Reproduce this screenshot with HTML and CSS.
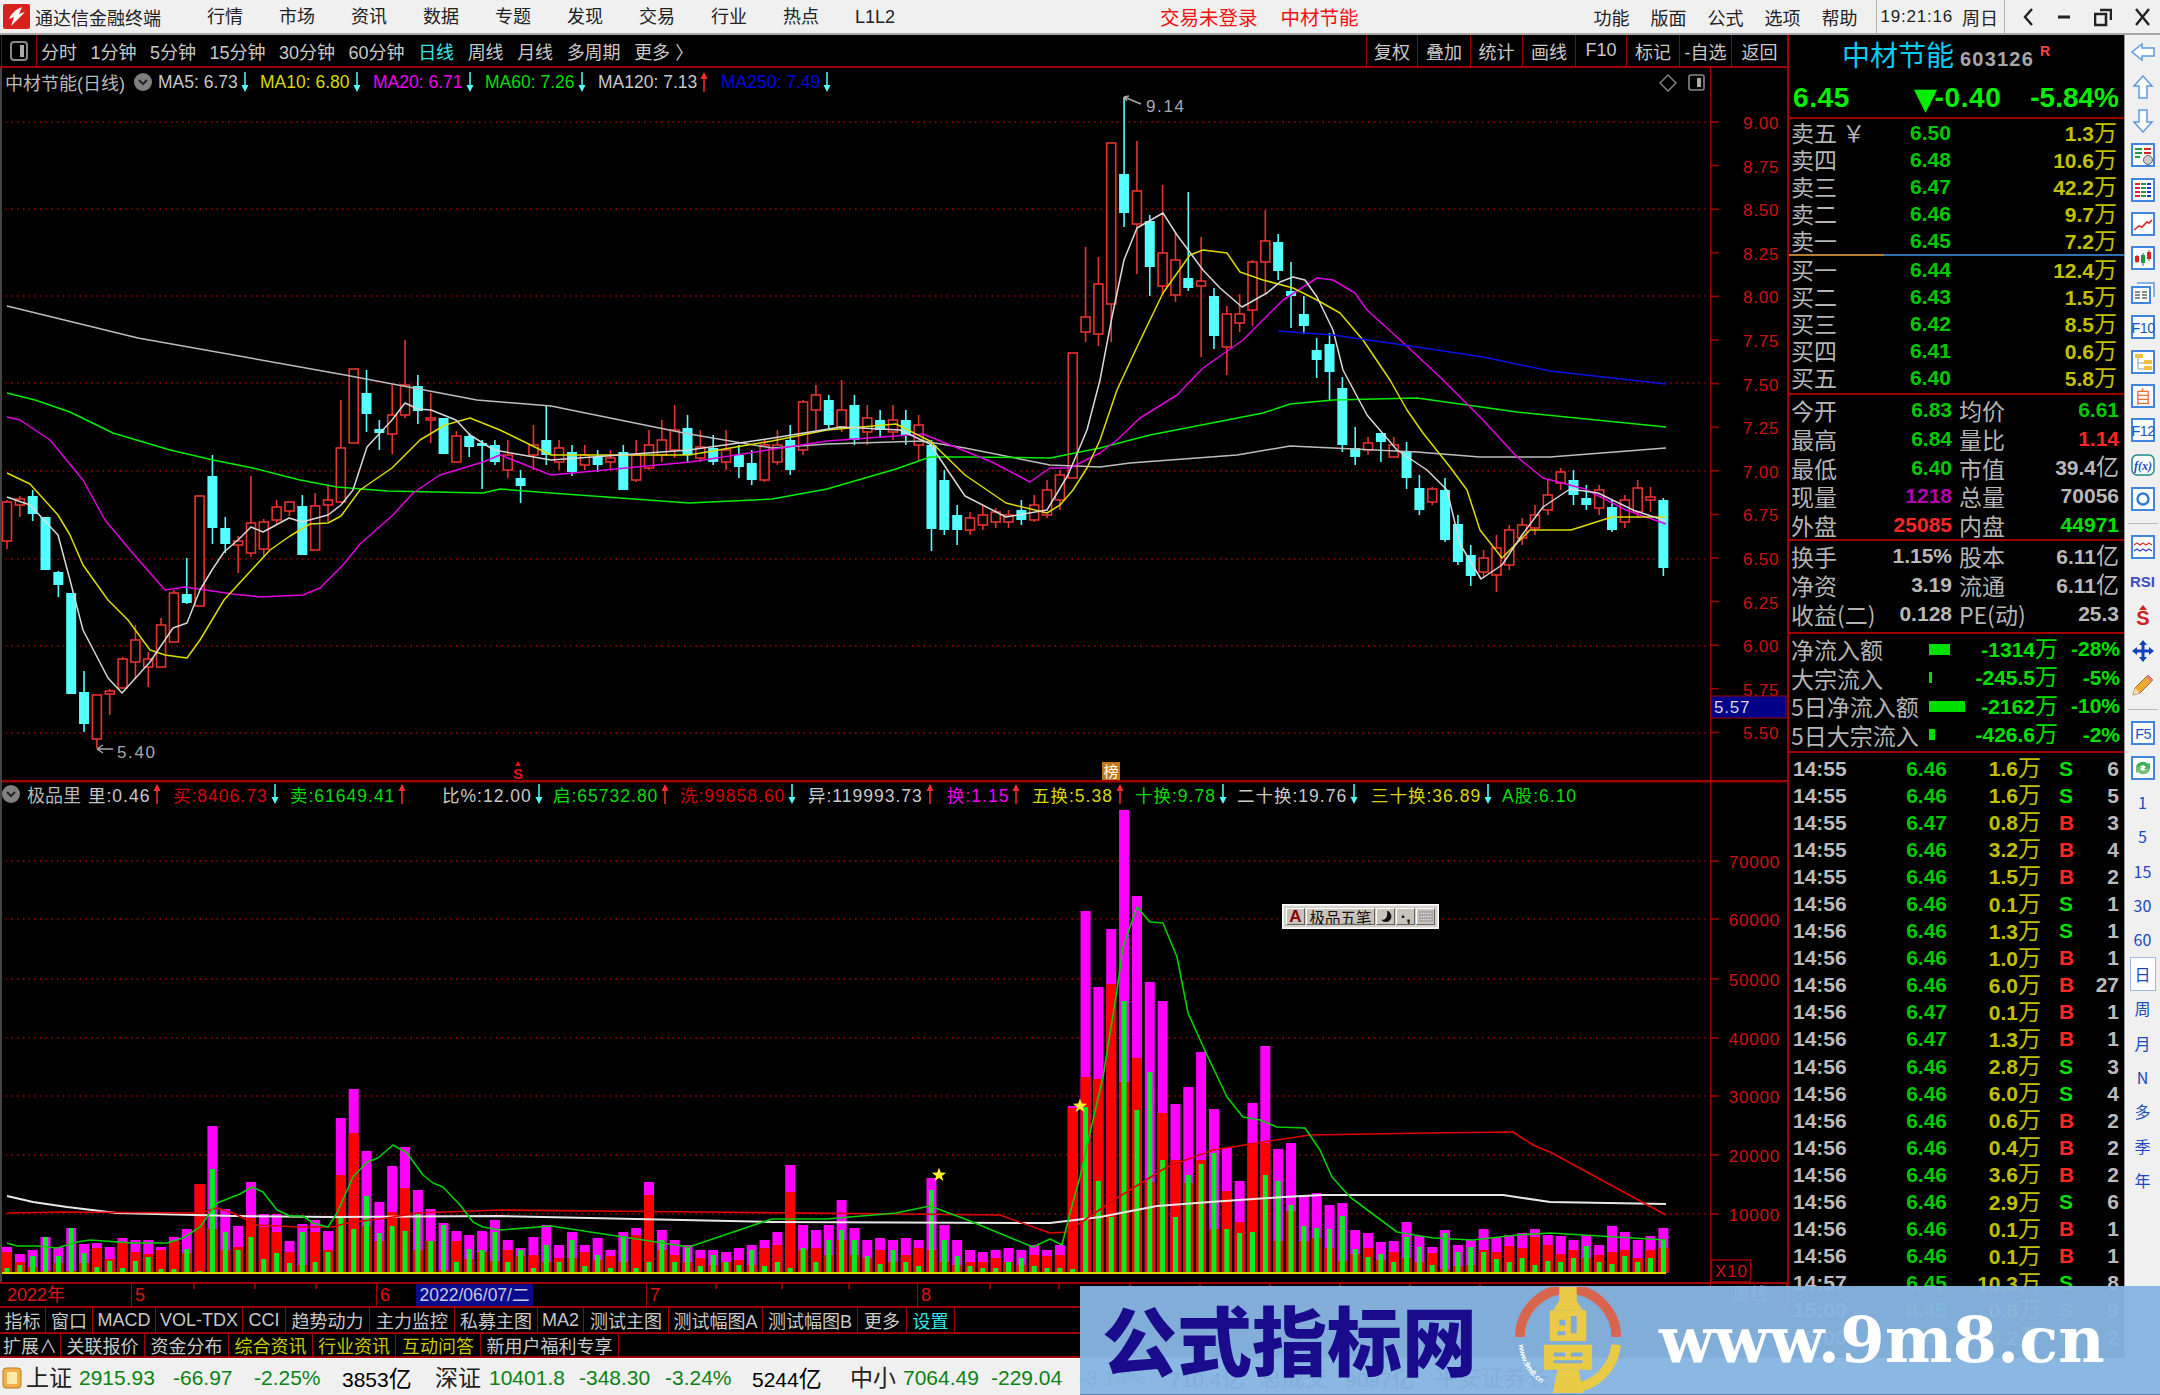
FILE: index.html
```html
<!DOCTYPE html>
<html lang="zh-CN">
<head>
<meta charset="utf-8">
<title>通达信金融终端</title>
<link rel="stylesheet" href="styles.css">
</head>
<body>
<svg class="defs" width="0" height="0">
  <symbol id="up" viewBox="0 0 8 20"><path d="M4 20V5" stroke="#ff2a2a" stroke-width="1.5"/><path d="M4 0L7.5 7H.5Z" fill="#ff2a2a"/></symbol>
  <symbol id="down" viewBox="0 0 8 20"><path d="M4 0V15" stroke="#54ffff" stroke-width="1.5"/><path d="M4 20L7.5 13H.5Z" fill="#54ffff"/></symbol>
  <symbol id="chev" viewBox="0 0 18 18"><circle cx="9" cy="9" r="9" fill="#808080"/><path d="M5 7l4 4 4-4" fill="none" stroke="#222" stroke-width="2"/></symbol>
</svg>
<div class="app">
  <header class="titlebar">
    <svg class="logo" viewBox="0 0 27 25"><rect width="27" height="25" rx="2" fill="#d8201c"/><path d="M19 3C13 5 8 10 6 15l5-2-3 9C13 17 18 12 22 8l-6 2Z" fill="#fff"/></svg>
    <span class="app-name">通达信金融终端</span>
    <nav class="menu">
      <span>行情</span><span>市场</span><span>资讯</span><span>数据</span><span>专题</span><span>发现</span><span>交易</span><span>行业</span><span>热点</span><span>L1L2</span>
    </nav>
    <span class="alert first">交易未登录</span>
    <span class="alert">中材节能</span>
    <nav class="menu-right">
      <span>功能</span><span>版面</span><span>公式</span><span>选项</span><span>帮助</span>
    </nav>
    <div class="clock"><span class="time">19:21:16</span><span>周日</span></div>
    <div class="winbtns">
      <svg viewBox="0 0 12 20"><path d="M10 2L3 10l7 8" fill="none" stroke="#222" stroke-width="2.4"/></svg>
      <svg viewBox="0 0 14 20"><path d="M1 10h12" stroke="#222" stroke-width="3"/></svg>
      <svg viewBox="0 0 18 20"><path d="M6 3h11v10M1 7h11v11H1Z" fill="none" stroke="#222" stroke-width="2.6"/></svg>
      <svg viewBox="0 0 15 20"><path d="M1 2l13 16M14 2L1 18" stroke="#222" stroke-width="2.4"/></svg>
    </div>
  </header>

  <div class="workspace">
    <main class="left">
      <div class="toolbar">
        <div class="tool-icon"><svg viewBox="0 0 20 22"><rect x="2" y="2" width="16" height="18" rx="3" fill="none" stroke="#888" stroke-width="2"/><rect x="11" y="5" width="4" height="12" fill="#aaa"/></svg></div>
        <div class="periods">
          <span>分时</span><span>1分钟</span><span>5分钟</span><span>15分钟</span><span>30分钟</span><span>60分钟</span><span class="on">日线</span><span>周线</span><span>月线</span><span>多周期</span><span>更多 〉</span>
        </div>
        <div class="tool-right">
          <span>复权</span><span>叠加</span><span>统计</span><span>画线</span><span>F10</span><span>标记</span><span>-自选</span><span>返回</span>
        </div>
      </div>

      <div class="chart">
        <svg id="chart" class="chart-svg" viewBox="0 68 1787 1214" width="1787" height="1214"></svg>

        <div class="legend legend-price">
          <span class="name">中材节能(日线)</span>
          <svg class="chev"><use href="#chev"/></svg>
          <span class="it w">MA5: 6.73<svg class="arr"><use href="#down"/></svg></span>
          <span class="it y">MA10: 6.80<svg class="arr"><use href="#down"/></svg></span>
          <span class="it m">MA20: 6.71<svg class="arr"><use href="#down"/></svg></span>
          <span class="it g">MA60: 7.26<svg class="arr"><use href="#down"/></svg></span>
          <span class="it w">MA120: 7.13<svg class="arr"><use href="#up"/></svg></span>
          <span class="it b">MA250: 7.49<svg class="arr"><use href="#down"/></svg></span>
        </div>

        <div class="legend legend-vol">
          <svg class="chev"><use href="#chev"/></svg>
          <span class="name">极品里</span>
          <span class="it w">里:0.46<svg class="arr"><use href="#up"/></svg></span>
          <span class="it r">买:8406.73<svg class="arr"><use href="#down"/></svg></span>
          <span class="it g">卖:61649.41<svg class="arr"><use href="#up"/></svg></span>
          <span class="it w">比%:12.00<svg class="arr"><use href="#down"/></svg></span>
          <span class="it g">启:65732.80<svg class="arr"><use href="#up"/></svg></span>
          <span class="it r">洗:99858.60<svg class="arr"><use href="#down"/></svg></span>
          <span class="it w">异:119993.73<svg class="arr"><use href="#up"/></svg></span>
          <span class="it m">换:1.15<svg class="arr"><use href="#up"/></svg></span>
          <span class="it y">五换:5.38<svg class="arr"><use href="#up"/></svg></span>
          <span class="it g">十换:9.78<svg class="arr"><use href="#down"/></svg></span>
          <span class="it w">二十换:19.76<svg class="arr"><use href="#down"/></svg></span>
          <span class="it y">三十换:36.89<svg class="arr"><use href="#down"/></svg></span>
          <span class="it g">A股:6.10</span>
        </div>

        <div class="ime">
          <span class="ime-btn ime-a">A</span>
          <span class="ime-btn ime-name">极品五笔</span>
          <span class="ime-btn ime-ic"><svg viewBox="0 0 16 16"><path d="M9 1A7 7 0 1 1 2 12C7 13 11 8 9 1Z" fill="#111"/></svg></span>
          <span class="ime-btn ime-ic">·,</span>
          <span class="ime-btn ime-ic"><svg viewBox="0 0 18 14"><rect width="18" height="14" fill="#a8a8a8"/><path d="M2 3h14M2 7h14M2 11h14" stroke="#eee" stroke-dasharray="2 1"/></svg></span>
        </div>
      </div>

      <div class="daterow">
        <span class="dcell year">2022年</span>
        <span class="dcell">5</span>
        <span class="dcell">6</span>
        <span class="dcell">7</span>
        <span class="dcell">8</span>
        <span class="dcell dcell-end">周线</span>
        <svg class="dticks" viewBox="0 0 1787 6" width="1787" height="6"><path d="M194 0v5M255 0v5M316 0v5M716 0v5M782 0v5M849 0v5M990 0v5M1059 0v5M1130 0v5M1200 0v5M1270 0v5M1340 0v5M1410 0v5M1480 0v5" stroke="#b00000" stroke-width="1.5"/></svg>
        <span class="dcursor">2022/06/07/二</span>
      </div>

      <div class="tabs tabs-a">
        <span>指标</span><span>窗口</span><span>MACD</span><span>VOL-TDX</span><span>CCI</span><span>趋势动力</span><span>主力监控</span><span>私募主图</span><span>MA2</span><span>测试主图</span><span>测试幅图A</span><span>测试幅图B</span><span>更多</span><span class="cy">设置</span>
      </div>
      <div class="tabs tabs-b">
        <span>扩展∧</span><span>关联报价</span><span>资金分布</span><span class="ye">综合资讯</span><span class="ye">行业资讯</span><span class="ye">互动问答</span><span>新用户福利专享</span>
      </div>
    </main>

    <aside class="quote">
      <div class="q-head">
        <span class="q-name">中材节能</span><span class="q-code">603126</span><span class="q-r">R</span>
      </div>
      <div class="q-price">
        <span>6.45</span><span class="q-chg"><b class="tri">▼</b>-0.40</span><span>-5.84%</span>
      </div>
      <div class="book">
        <div class="book-row"><span class="k">卖五 ￥</span><span class="v gr">6.50</span><span class="q ye2">1.3<i class="u">万</i></span></div>
        <div class="book-row"><span class="k">卖四</span><span class="v gr">6.48</span><span class="q ye2">10.6<i class="u">万</i></span></div>
        <div class="book-row"><span class="k">卖三</span><span class="v gr">6.47</span><span class="q ye2">42.2<i class="u">万</i></span></div>
        <div class="book-row"><span class="k">卖二</span><span class="v gr">6.46</span><span class="q ye2">9.7<i class="u">万</i></span></div>
        <div class="book-row"><span class="k">卖一</span><span class="v gr">6.45</span><span class="q ye2">7.2<i class="u">万</i></span></div>
      </div>
      <div class="book-mid"></div>
      <div class="book book-buy">
        <div class="book-row"><span class="k">买一</span><span class="v gr">6.44</span><span class="q ye2">12.4<i class="u">万</i></span></div>
        <div class="book-row"><span class="k">买二</span><span class="v gr">6.43</span><span class="q ye2">1.5<i class="u">万</i></span></div>
        <div class="book-row"><span class="k">买三</span><span class="v gr">6.42</span><span class="q ye2">8.5<i class="u">万</i></span></div>
        <div class="book-row"><span class="k">买四</span><span class="v gr">6.41</span><span class="q ye2">0.6<i class="u">万</i></span></div>
        <div class="book-row"><span class="k">买五</span><span class="v gr">6.40</span><span class="q ye2">5.8<i class="u">万</i></span></div>
      </div>
      <div class="stats">
        <div class="st-row"><span class="k">今开</span><span class="v gr">6.83</span><span class="k k2">均价</span><span class="v gr">6.61</span></div>
        <div class="st-row"><span class="k">最高</span><span class="v gr">6.84</span><span class="k k2">量比</span><span class="v rd">1.14</span></div>
        <div class="st-row"><span class="k">最低</span><span class="v gr">6.40</span><span class="k k2">市值</span><span class="v wh">39.4<i class="u">亿</i></span></div>
        <div class="st-row"><span class="k">现量</span><span class="v mg">1218</span><span class="k k2">总量</span><span class="v wh">70056</span></div>
        <div class="st-row"><span class="k">外盘</span><span class="v rd">25085</span><span class="k k2">内盘</span><span class="v gr2">44971</span></div>
      </div>
      <div class="stats stats-b">
        <div class="st-row"><span class="k">换手</span><span class="v wh">1.15%</span><span class="k k2">股本</span><span class="v wh">6.11<i class="u">亿</i></span></div>
        <div class="st-row"><span class="k">净资</span><span class="v wh">3.19</span><span class="k k2">流通</span><span class="v wh">6.11<i class="u">亿</i></span></div>
        <div class="st-row"><span class="k">收益(二)</span><span class="v wh">0.128</span><span class="k k2">PE(动)</span><span class="v wh">25.3</span></div>
      </div>
      <div class="flows">
        <div class="fl-row"><span class="k">净流入额</span><span class="barcell"><i style="width:21px"></i></span><span class="v gr2">-1314<i class="u">万</i></span><span class="v gr2">-28%</span></div>
        <div class="fl-row"><span class="k">大宗流入</span><span class="barcell"><i style="width:3px"></i></span><span class="v gr2">-245.5<i class="u">万</i></span><span class="v gr2">-5%</span></div>
        <div class="fl-row"><span class="k">5日净流入额</span><span class="barcell"><i style="width:36px"></i></span><span class="v gr2">-2162<i class="u">万</i></span><span class="v gr2">-10%</span></div>
        <div class="fl-row"><span class="k">5日大宗流入</span><span class="barcell"><i style="width:6px"></i></span><span class="v gr2">-426.6<i class="u">万</i></span><span class="v gr2">-2%</span></div>
      </div>
      <div class="ticks">
        <div class="tk"><span>14:55</span><span class="gr">6.46</span><span class="ye2">1.6<i class="u">万</i></span><span class="gr2">S</span><span>6</span></div>
        <div class="tk"><span>14:55</span><span class="gr">6.46</span><span class="ye2">1.6<i class="u">万</i></span><span class="gr2">S</span><span>5</span></div>
        <div class="tk"><span>14:55</span><span class="gr">6.47</span><span class="ye2">0.8<i class="u">万</i></span><span class="rd">B</span><span>3</span></div>
        <div class="tk"><span>14:55</span><span class="gr">6.46</span><span class="ye2">3.2<i class="u">万</i></span><span class="rd">B</span><span>4</span></div>
        <div class="tk"><span>14:55</span><span class="gr">6.46</span><span class="ye2">1.5<i class="u">万</i></span><span class="rd">B</span><span>2</span></div>
        <div class="tk"><span>14:56</span><span class="gr">6.46</span><span class="ye2">0.1<i class="u">万</i></span><span class="gr2">S</span><span>1</span></div>
        <div class="tk"><span>14:56</span><span class="gr">6.46</span><span class="ye2">1.3<i class="u">万</i></span><span class="gr2">S</span><span>1</span></div>
        <div class="tk"><span>14:56</span><span class="gr">6.46</span><span class="ye2">1.0<i class="u">万</i></span><span class="rd">B</span><span>1</span></div>
        <div class="tk"><span>14:56</span><span class="gr">6.46</span><span class="ye2">6.0<i class="u">万</i></span><span class="rd">B</span><span>27</span></div>
        <div class="tk"><span>14:56</span><span class="gr">6.47</span><span class="ye2">0.1<i class="u">万</i></span><span class="rd">B</span><span>1</span></div>
        <div class="tk"><span>14:56</span><span class="gr">6.47</span><span class="ye2">1.3<i class="u">万</i></span><span class="rd">B</span><span>1</span></div>
        <div class="tk"><span>14:56</span><span class="gr">6.46</span><span class="ye2">2.8<i class="u">万</i></span><span class="gr2">S</span><span>3</span></div>
        <div class="tk"><span>14:56</span><span class="gr">6.46</span><span class="ye2">6.0<i class="u">万</i></span><span class="gr2">S</span><span>4</span></div>
        <div class="tk"><span>14:56</span><span class="gr">6.46</span><span class="ye2">0.6<i class="u">万</i></span><span class="rd">B</span><span>2</span></div>
        <div class="tk"><span>14:56</span><span class="gr">6.46</span><span class="ye2">0.4<i class="u">万</i></span><span class="rd">B</span><span>2</span></div>
        <div class="tk"><span>14:56</span><span class="gr">6.46</span><span class="ye2">3.6<i class="u">万</i></span><span class="rd">B</span><span>2</span></div>
        <div class="tk"><span>14:56</span><span class="gr">6.46</span><span class="ye2">2.9<i class="u">万</i></span><span class="gr2">S</span><span>6</span></div>
        <div class="tk"><span>14:56</span><span class="gr">6.46</span><span class="ye2">0.1<i class="u">万</i></span><span class="rd">B</span><span>1</span></div>
        <div class="tk"><span>14:56</span><span class="gr">6.46</span><span class="ye2">0.1<i class="u">万</i></span><span class="rd">B</span><span>1</span></div>
        <div class="tk"><span>14:57</span><span class="gr">6.45</span><span class="ye2">10.3<i class="u">万</i></span><span class="gr2">S</span><span>8</span></div>
        <div class="tk"><span>15:00</span><span class="gr">6.45</span><span class="ye2">0.6<i class="u">万</i></span><span class="gr2">S</span><span>9</span></div>
        <div class="tk"><span>15:00</span><span class="gr">6.45</span><span class="ye2">0.2<i class="u">万</i></span><span class="gr2">S</span><span>2</span></div>
      </div>
    </aside>

    <aside class="sidebar">
      <svg class="ico" viewBox="0 0 24 24"><path class="arrow" d="M1 12L11 4V8H23V16H11V20Z"/></svg>
      <svg class="ico" viewBox="0 0 24 24"><path class="arrow" d="M12 1L21 11H16V23H8V11H3Z"/></svg>
      <svg class="ico" viewBox="0 0 24 24"><path class="arrow" d="M12 23L21 13H16V1H8V13H3Z"/></svg>
      <svg class="ico" viewBox="0 0 24 24"><rect class="frame" x="1" y="1" width="22" height="22"/><path d="M4 6h7M4 10h7M4 14h5" stroke="#1a9a3a" stroke-width="2"/><path d="M13 6h7M13 10h7" stroke="#e02020" stroke-width="2"/><circle cx="17" cy="17" r="4.5" fill="#ccc" stroke="#666"/></svg>
      <svg class="ico" viewBox="0 0 24 24"><rect class="frame" x="1" y="1" width="22" height="22"/><path d="M4 6h5M4 10h5M4 14h5M4 18h5" stroke="#e02020" stroke-width="2"/><path d="M10 6h5M10 10h5M10 14h5M10 18h5" stroke="#1a9a3a" stroke-width="2"/><path d="M16 6h4M16 10h4M16 14h4M16 18h4" stroke="#2030d0" stroke-width="2"/></svg>
      <svg class="ico" viewBox="0 0 24 24"><rect class="frame" x="1" y="1" width="22" height="22"/><path d="M3 18l5-4 3 1 5-5 2 1 3-3" fill="none" stroke="#e02020" stroke-width="1.6"/></svg>
      <svg class="ico" viewBox="0 0 24 24"><rect class="frame" x="1" y="1" width="22" height="22"/><path d="M6 9v8M12 7v13M18 4v11" stroke="#555" stroke-width="1"/><rect x="4" y="10" width="4" height="6" fill="#e02020"/><rect x="10" y="9" width="4" height="8" fill="#1a9a3a"/><rect x="16" y="6" width="4" height="7" fill="#e02020"/></svg>
      <svg class="ico" viewBox="0 0 24 24"><path d="M6 2h17v14" fill="#fff" stroke="#5b9be0" stroke-width="1.5"/><rect class="frame" x="1" y="6" width="18" height="16"/><path d="M4 11h5M11 11h5M4 14h5M11 14h5M4 17h5M11 17h5" stroke="#666" stroke-width="1.5"/></svg>
      <svg class="ico" viewBox="0 0 24 24"><rect class="frame" x="1" y="1" width="22" height="22"/><text class="ico-f" x="12" y="18">F10</text></svg>
      <svg class="ico" viewBox="0 0 24 24"><rect class="frame" x="1" y="1" width="22" height="22"/><path d="M7 8v11h6M7 13h6" fill="none" stroke="#999"/><rect x="4" y="4" width="8" height="4" fill="#f0c040"/><rect x="13" y="10" width="8" height="4" fill="#f0c040"/><rect x="13" y="16" width="8" height="4" fill="#f0c040"/></svg>
      <svg class="ico" viewBox="0 0 24 24"><rect class="frame" x="1" y="1" width="22" height="22"/><text class="ico-o" x="12" y="19">自</text></svg>
      <svg class="ico" viewBox="0 0 24 24"><rect class="frame" x="1" y="1" width="22" height="22"/><text class="ico-f" x="12" y="18">F12</text></svg>
      <svg class="ico" viewBox="0 0 24 24"><rect x="1" y="2" width="22" height="20" rx="5" fill="#fff" stroke="#1a8a8a" stroke-width="1.5"/><text class="ico-x" x="12" y="17">f(x)</text></svg>
      <svg class="ico" viewBox="0 0 24 24"><rect class="frame" x="1" y="1" width="22" height="22"/><circle cx="12" cy="12" r="5.5" fill="none" stroke="#2a7ae0" stroke-width="2.4"/></svg>
      <div class="side-sep"></div>
      <svg class="ico" viewBox="0 0 24 24"><rect class="frame" x="1" y="1" width="22" height="22"/><path d="M3 10l3-2 3 2 3-2 3 2 3-2 3 2" fill="none" stroke="#e03030" stroke-width="1.3"/><path d="M3 16l3-2 3 2 3-2 3 2 3-2 3 2" fill="none" stroke="#3040d0" stroke-width="1.3"/></svg>
      <span class="side-rsi">RSI</span>
      <svg class="ico" viewBox="0 0 24 24"><path d="M12 1l4 5h-8Z" fill="#d02020"/><text class="ico-s" x="12" y="21">S</text></svg>
      <svg class="ico" viewBox="0 0 24 24"><path d="M12 1l4 5h-2.5v4.5H18V8l5 4-5 4v-2.500h-4.500V18H16l-4 5-4-5h2.500v-4.500H6V16l-5-4 5-4v2.500h4.500V6H8Z" fill="#1040c0"/></svg>
      <svg class="ico" viewBox="0 0 24 24"><path d="M2 22l2-7L17 2l5 5L9 20Z" fill="#f0a830" stroke="#8a6a30"/><path d="M2 22l2-7 5 5Z" fill="#f5e0b0"/><path d="M17 2l5 5-2 2-5-5Z" fill="#e08080"/></svg>
      <div class="side-sep"></div>
      <svg class="ico" viewBox="0 0 24 24"><rect class="frame" x="1" y="1" width="22" height="22"/><text class="ico-f" x="12" y="18">F5</text></svg>
      <svg class="ico" viewBox="0 0 24 24"><rect class="frame" x="1" y="1" width="22" height="22"/><path d="M5 11a7 7 0 0 1 12-3l2-1v6h-6l2-2a4 4 0 0 0-7 1Z" fill="#40b050"/><path d="M19 13a7 7 0 0 1-12 3l-2 1v-6h6l-2 2a4 4 0 0 0 7-1Z" fill="#70c070"/></svg>
      <span class="side-t">1</span><span class="side-t">5</span><span class="side-t">15</span><span class="side-t">30</span><span class="side-t">60</span>
      <span class="side-t side-on">日</span><span class="side-t">周</span><span class="side-t">月</span><span class="side-t">N</span><span class="side-t">多</span><span class="side-t">季</span><span class="side-t">年</span>
    </aside>
  </div>

  <footer class="status">
    <svg class="status-ico" viewBox="0 0 20 22"><rect x="1" y="1" width="18" height="20" rx="3" fill="#f2b04a" stroke="#b87a20"/><rect x="5" y="5" width="10" height="12" fill="#fde9a8"/></svg>
    <span class="lab">上证</span><span class="up">2915.93</span><span class="up">-66.97</span><span class="up">-2.25%</span><span class="amt">3853<i class="amtu">亿</i></span>
    <span class="lab">深证</span><span class="up">10401.8</span><span class="up">-348.30</span><span class="up">-3.24%</span><span class="amt">5244<i class="amtu">亿</i></span>
    <span class="lab">中小</span><span class="up">7064.49</span><span class="up">-229.04</span><span class="up">-3.14%</span><span class="amt">710.4<i class="amtu">亿</i></span>
    <span class="lab">总成交</span><span class="amt">9097<i class="amtu">亿</i></span><span class="lab">平安证券长方</span>
  </footer>

  <aside class="banner">
    <span class="banner-cn">公式指标网</span>
    <svg class="banner-logo" viewBox="0 0 110 110">
      <path d="M5 52A50 50 0 0 1 105 52" fill="none" stroke="#d9654e" stroke-width="10"/>
      <path d="M105 60A50 50 0 0 1 60 105" fill="none" stroke="#e9cb48" stroke-width="10"/>
      <path d="M46 0h18v14l6 10H40l6-10Z" fill="#e9cb48"/>
      <path d="M36 24h38v32H36Z" fill="#e9cb48"/>
      <path d="M46 34h6v6h-6ZM58 30h6v18h-6ZM44 46h8v4h-8Z" fill="#7fabd8"/>
      <path d="M30 60h50v26H30Z" fill="#e9cb48"/>
      <path d="M40 68h12v4H40ZM58 68h12v4H58ZM40 76h30v3H40Z" fill="#7fabd8"/>
      <path d="M44 86h22l5 24H39Z" fill="#e9cb48"/>
      <path id="arcText" d="M4 60A52 52 0 0 0 40 106" fill="none"/>
      <text class="banner-arc"><textPath href="#arcText">www.9m8.cn</textPath></text>
    </svg>
    <span class="banner-url">www.9m8.cn</span>
  </aside>
</div>
<script src="chart.js"></script>
</body>
</html>
```

FILE: styles.css
```css
* { box-sizing: border-box; }
html, body { margin: 0; padding: 0; background: #000; }
body { font-family: "Liberation Sans", "Noto Sans CJK SC", sans-serif; }
.defs { position: absolute; }

.app { width: 2160px; height: 1395px; display: flex; flex-direction: column; overflow: hidden; position: relative; background: #000; }

/* title bar */
.titlebar { height: 35px; flex: none; display: flex; align-items: center; padding-left: 3px; background: #f0f0f0; border-bottom: 2px solid #a8a8a8; color: #222; font-size: 18px; }
.logo { width: 27px; height: 25px; flex: none; }
.app-name { margin-left: 5px; width: 126px; white-space: nowrap; }
.menu { display: flex; align-items: center; gap: 36px; margin-left: 46px; }
.menu span { width: 36px; white-space: nowrap; line-height: 24px; }
.alert { color: #f01010; font-size: 19.500px; white-space: nowrap; margin-left: 23px; }
.alert.first { margin-left: 269px; }
.menu-right { display: flex; gap: 21px; margin-left: auto; }
.menu-right span { white-space: nowrap; }
.clock { height: 33px; display: flex; align-items: center; gap: 9px; margin-left: 19px; padding: 0 6px 0 3px; border-left: 1px solid #b0b0b0; border-right: 1px solid #b0b0b0; white-space: nowrap; }
.time { font-size: 17px; letter-spacing: .8px; }
.winbtns { display: flex; align-items: center; gap: 23px; padding: 0 10px 0 17px; }
.winbtns svg { height: 20px; width: auto; }
.winbtns svg:nth-child(1) { width: 12px; }
.winbtns svg:nth-child(2) { width: 14px; }
.winbtns svg:nth-child(3) { width: 18px; }
.winbtns svg:nth-child(4) { width: 15px; }

.workspace { flex: none; height: 1323px; display: flex; }

/* left column */
.left { width: 1787px; flex: none; display: flex; flex-direction: column; }
.toolbar { height: 33px; flex: none; display: flex; align-items: stretch; border-bottom: 2px solid #a00000; color: #c8c8c8; font-size: 18px; }
.tool-icon { width: 36px; margin-left: 1px; border-left: 1px solid #900000; border-right: 1px solid #900000; display: flex; align-items: center; justify-content: center; flex: none; }
.tool-icon svg { width: 20px; height: 22px; }
.periods { display: flex; align-items: center; gap: 13.500px; margin-left: 4px; }
.periods span { white-space: nowrap; }
.periods .on { color: #35e8e8; }
.tool-right { display: grid; grid-template-columns: 51px 53px 52px 53px 51px 53px 52px 56px; margin-left: auto; }
.tool-right span { display: flex; align-items: center; justify-content: center; border-left: 1px solid #900000; white-space: nowrap; }

.chart { height: 1214px; flex: none; position: relative; border-left: 2px solid #444; overflow: hidden; }
.chart-svg { display: block; margin-left: -2px; }
.axis { font-family: "Liberation Sans", sans-serif; font-size: 17px; fill: #d01010; letter-spacing: .8px; }
.mark { font-family: "Liberation Sans", sans-serif; font-size: 17px; fill: #a8a8a8; letter-spacing: 1.6px; }
.flag { font-family: "Noto Sans CJK SC", sans-serif; font-size: 15px; fill: #fff; }
.dollar { font-family: "Liberation Sans", sans-serif; font-size: 15px; font-weight: bold; fill: #e01010; }

.legend { position: absolute; left: 0; display: grid; align-items: center; height: 26px; font-size: 17.500px; color: #c8c8c8; white-space: nowrap; }
.legend-price { top: 1px; padding-left: 3px; grid-template-columns: 129px 24px 102px 113px 112px 113px 123px 120px; }
.legend-vol { top: 713px; padding-left: 0; letter-spacing: 1px; grid-template-columns: 25px 61px 85px 117px 152px 111px 127px 128px 139px 85px 103px 102px 134px 131px 90px; }
.legend .name { color: #b8b8b8; letter-spacing: 0; font-size: 18px; }
.chev { width: 18px; height: 18px; }
.it { display: flex; align-items: center; gap: 3px; }
.arr { width: 8px; height: 20px; flex: none; }
.w { color: #c8c8c8; }
.y { color: #d8d800; }
.m { color: #ee00ee; }
.g { color: #00dd00; }
.b { color: #0000e0; }
.r { color: #d80000; }

.ime { position: absolute; left: 1280px; top: 836px; width: 157px; height: 25px; display: flex; gap: 1px; padding: 3px; background: #d4d0c8; border: 1px solid #fff; box-shadow: inset 0 0 0 1px #eee; color: #111; font-size: 16px; }
.ime-btn { display: flex; align-items: center; justify-content: center; background: #c8c4bc; border-right: 1px solid #666; border-bottom: 1px solid #666; border-top: 1px solid #fff; border-left: 1px solid #fff; white-space: nowrap; overflow: hidden; }
.ime-a { width: 19px; color: #8b0000; font-weight: bold; font-size: 17px; }
.ime-name { width: 70px; font-size: 15.500px; }
.ime-ic { width: 19px; font-weight: bold; }
.ime-ic svg { width: 14px; height: 13px; }

/* date and tab rows */
.daterow { height: 24px; flex: none; position: relative; display: grid; grid-template-columns: 132px 245px 270px 271px 793px 76px; border-top: 2px solid #a00000; font-size: 18px; color: #e01010; }
.dcell { padding-left: 3px; border-right: 1px solid #a00000; line-height: 22px; white-space: nowrap; }
.dcell:first-child { padding-left: 7px; }
.dcell-end { color: #bbb; text-align: center; }
.dticks { position: absolute; left: 0; top: 0; }
.dcursor { position: absolute; left: 416px; top: 0; width: 117px; height: 22px; background: #0a0a8c; color: #c8c8e0; font-size: 17.500px; line-height: 22px; text-align: center; white-space: nowrap; }

.tabs { height: 26px; flex: none; display: grid; border-top: 2px solid #a00000; color: #c8c8c8; font-size: 18px; }
.tabs span { display: flex; align-items: center; justify-content: center; border-right: 1px solid #a00000; white-space: nowrap; overflow: hidden; }
.tabs-a { grid-template-columns: 46px 47px 63px 87px 43px 84px 85px 83px 46px 85px 94px 95px 49px 48px; }
.tabs-b { height: 26px; border-bottom: 2px solid #a00000; grid-template-columns: 61px 84px 84px 84px 83px 85px 138px; }
.tabs .cy { color: #30e8e8; }
.tabs .ye { color: #c8c800; }

/* quote panel */
.quote { width: 337px; flex: none; border-left: 2px solid #a00000; color: #bbb; overflow: hidden; background: #000; }
.gr { color: #00c800; }
.gr2 { color: #00e000; }
.rd { color: #ff2525; }
.mg { color: #b000b0; }
.wh { color: #b8b8b8; }
.ye2 { color: #c0c000; }
.u { font: normal 23px/22px "Noto Sans CJK SC", sans-serif; }

.q-head { height: 46px; display: flex; align-items: baseline; padding: 3px 0 0 53px; }
.q-name { font-size: 28px; color: #08cdf5; line-height: 38px; }
.q-code { margin-left: 6px; font: bold 20px "Liberation Sans", sans-serif; letter-spacing: 1.200px; color: #a8a8a8; }
.q-r { margin-left: 6px; font: bold 14px "Liberation Sans", sans-serif; color: #ff4040; transform: translateY(-10px); }
.q-price { height: 38px; display: flex; align-items: center; padding: 0 5px 2px 4px; font: bold 28px "Liberation Sans", sans-serif; color: #00f000; letter-spacing: .6px; border-bottom: 2px solid #a00000; }
.q-chg { margin-left: 64px; display: flex; align-items: center; }
.tri { font-size: 30px; font-family: "DejaVu Sans", sans-serif; font-weight: normal; margin-right: -3px; }
.q-price span:nth-child(3) { margin-left: auto; letter-spacing: 0; }

.k { font-size: 23px; line-height: 26px; white-space: nowrap; color: #b4b4b4; font-family: "Noto Sans CJK SC", sans-serif; font-weight: 400; }
.v, .q { font: bold 21px/26px "Liberation Sans", "Noto Sans CJK SC", sans-serif; white-space: nowrap; }

.book { height: 135px; }
.book-buy { height: 139px; border-bottom: 2px solid #a00000; }
.book-row { height: 27px; padding: 0 0 4px 2px; display: grid; grid-template-columns: 119px 60px 147px; align-items: center; }
.book-row .k { padding-bottom: 2px; }
.book-row .q { text-align: right; }
.book-mid { height: 2px; background: linear-gradient(to right, #b08030 95px, #3070b0 95px); }

.stats { height: 146px; padding-top: 1px; border-bottom: 2px solid #a00000; }
.stats-b { height: 93px; }
.st-row { height: 28.700px; padding-left: 2px; display: grid; grid-template-columns: 60px 101px 67px 100px; align-items: center; }
.st-row .v { text-align: right; }
.k2 { padding-left: 7px; }

.flows { height: 119px; padding-top: 1px; border-bottom: 2px solid #a00000; }
.fl-row { height: 28.500px; padding-left: 2px; display: grid; grid-template-columns: 138px 36px 93px 62px; align-items: center; }
.fl-row .v { text-align: right; }
.barcell { display: flex; align-items: center; }
.barcell i { display: block; height: 11px; background: #00e000; }

.ticks { padding-top: 2px; }
.tk { height: 27.100px; padding-left: 4px; display: grid; grid-template-columns: 84px 70px 94px 30px 48px; align-items: center; font: bold 21px/26px "Liberation Sans", "Noto Sans CJK SC", sans-serif; }
.tk span:nth-child(2), .tk span:nth-child(3), .tk span:nth-child(5) { text-align: right; }
.tk span:nth-child(4) { padding-left: 18px; }

/* sidebar */
.sidebar { width: 36px; flex: none; background: #f0f0f0; border-left: 1px solid #999; display: flex; flex-direction: column; align-items: center; }
.ico { width: 24px; height: 24px; margin: 5.200px 0; flex: none; }
.arrow { fill: #fff; stroke: #5b9be0; stroke-width: 1.500; }
.frame { fill: #fff; stroke: #3f86dc; stroke-width: 2; }
.ico-f { font: 14.500px "Liberation Sans", sans-serif; fill: #1a55c0; text-anchor: middle; letter-spacing: -.6px; }
.ico-o { font: 17px "Noto Sans CJK SC", sans-serif; fill: #f07030; text-anchor: middle; }
.ico-x { font: italic bold 12px "Liberation Serif", serif; fill: #1a4ac0; text-anchor: middle; }
.ico-s { font: bold 20px "Liberation Sans", sans-serif; fill: #d02020; text-anchor: middle; }
.side-sep { width: 30px; height: 14px; flex: none; background: linear-gradient(#bbb, #bbb) center / 100% 1px no-repeat; }
.side-rsi { height: 34.400px; flex: none; font: bold 15px/34.400px "Liberation Sans", sans-serif; color: #3a4fc0; }
.side-t { width: 26px; height: 34.400px; flex: none; line-height: 34.400px; text-align: center; font-size: 16px; color: #1a4ac0; font-family: "Noto Sans CJK SC", sans-serif; }
.side-on { background: #fff; box-shadow: inset 0 0 0 1px #a0b8e0; }

/* status bar */
.status { height: 37px; flex: none; display: grid; grid-template-columns: 24px 53px 94px 81px 88px 93px 54px 90px 86px 87px 98px 53px 88px 88px 90px 90px 86px 90px 200px; align-items: center; padding: 2px 0 0 2px; background: #f0f0f0; border-top: 1px solid #fff; font-size: 21px; line-height: 28px; white-space: nowrap; overflow: hidden; }
.status-ico { width: 20px; height: 22px; }
.lab { font-size: 23px; color: #222; }
.up { color: #0a8214; }
.amt { color: #000; }
.amtu { font: normal 23px/28px "Noto Sans CJK SC", sans-serif; }

/* watermark banner */
.banner { position: absolute; left: 1080px; top: 1286px; width: 1080px; height: 109px; display: flex; align-items: center; padding: 0 0 6px 22px; background: rgba(134, 180, 226, .96); border-bottom: 1px solid #5f86ae; }
.banner-cn { font: 900 75px/1 "Noto Sans CJK SC", sans-serif; color: #1a0a8c; white-space: nowrap; width: 374px; flex: none; }
.banner-logo { width: 106px; height: 106px; margin: 6px 0 0 39px; flex: none; }
.banner-arc { font: bold 8px "Liberation Sans", sans-serif; fill: #fff; }
.banner-url { margin: 6px 0 0 38px; font: bold 64px/1 "DejaVu Serif", serif; color: #fff; white-space: nowrap; }
```

FILE: chart.js
```js
var NS = 'http://www.w3.org/2000/svg';
var svg = document.getElementById('chart');
var X0 = 7, STEP = 12.84;

function el(tag, attrs, text) {
  var n = document.createElementNS(NS, tag);
  for (var k in attrs) n.setAttribute(k, attrs[k]);
  if (text !== undefined) n.textContent = text;
  svg.appendChild(n);
  return n;
}
function cx(i) { return X0 + i * STEP; }
function line(pts, color, w) {
  el('polyline', { points: pts.map(function (p) { return p.join(','); }).join(' '), fill: 'none', stroke: color, 'stroke-width': w || 1.5, 'stroke-linejoin': 'round' });
}
function dotted(y) {
  el('line', { x1: 0, x2: 1710, y1: y, y2: y, stroke: '#a00000', 'stroke-width': 1.5, 'stroke-dasharray': '1.5 4.2' });
}

/* grid */
[122, 209, 296, 383, 471, 559, 646, 733, 861, 919, 979, 1038, 1096, 1155, 1214].forEach(dotted);

/* candles: [high, bodyTop, bodyBottom, low, r|c] in page pixels */
var C = [
[500,502,541,549,'r'],[496,499,505,517,'r'],[490,496,514,521,'c'],[517,517,570,570,'c'],[571,572,585,597,'c'],[593,593,694,694,'c'],[671,692,724,732,'c'],[695,695,739,748,'r'],[689,691,694,715,'r'],[657,659,688,688,'r'],
[625,640,662,679,'r'],[652,659,667,687,'r'],[618,625,667,667,'r'],[590,593,642,642,'r'],[558,594,603,604,'c'],[496,496,606,606,'r'],[455,476,528,544,'c'],[517,528,544,553,'c'],[536,541,545,573,'r'],[476,523,553,557,'r'],
[519,522,549,557,'r'],[500,507,520,525,'r'],[502,502,511,516,'r'],[495,506,555,555,'c'],[493,506,550,550,'r'],[486,500,505,522,'r'],[400,448,502,502,'r'],[369,369,443,443,'r'],[370,393,414,432,'c'],[420,429,433,450,'c'],
[385,415,434,454,'r'],[340,385,415,418,'r'],[375,386,411,424,'c'],[393,418,420,443,'r'],[418,418,454,454,'c'],[431,436,462,462,'r'],[433,436,447,457,'c'],[440,443,446,489,'c'],[440,445,462,465,'c'],[440,455,470,478,'r'],
[470,478,486,503,'c'],[425,445,455,470,'r'],[405,440,455,465,'c'],[440,448,462,470,'r'],[445,452,472,476,'c'],[445,455,465,470,'r'],[450,457,465,472,'c'],[450,458,462,470,'r'],[445,452,490,490,'c'],[440,455,480,482,'r'],
[430,445,468,470,'r'],[420,440,455,462,'r'],[405,430,450,458,'r'],[415,428,455,462,'c'],[430,447,458,462,'r'],[435,448,462,465,'c'],[430,450,462,470,'r'],[445,455,467,478,'c'],[450,463,480,485,'c'],[440,445,480,482,'r'],
[430,445,462,465,'r'],[425,440,470,475,'c'],[400,402,450,455,'r'],[385,395,410,430,'r'],[395,400,425,430,'c'],[380,410,427,432,'r'],[395,405,440,445,'c'],[405,418,432,445,'r'],[410,420,430,438,'c'],[405,420,432,440,'r'],
[410,420,435,445,'c'],[415,425,445,460,'r'],[440,445,529,551,'c'],[470,480,530,535,'c'],[505,515,530,545,'c'],[512,518,530,535,'r'],[505,515,525,530,'r'],[508,512,522,528,'r'],[510,515,522,528,'r'],[500,510,520,525,'c'],
[495,505,520,522,'r'],[480,490,515,518,'r'],[470,475,500,510,'r'],[353,353,478,478,'r'],[247,317,332,342,'r'],[257,284,334,346,'r'],[143,143,304,342,'r'],[97,174,213,227,'c'],[141,191,224,274,'r'],[215,221,267,296,'c'],
[185,253,286,295,'r'],[233,260,295,302,'r'],[192,278,288,291,'c'],[237,281,286,357,'r'],[288,296,336,349,'c'],[306,314,347,375,'r'],[294,314,323,332,'r'],[260,262,310,326,'r'],[210,241,262,293,'r'],[234,242,271,280,'c'],
[262,291,296,328,'c'],[296,314,326,334,'c'],[338,350,360,378,'c'],[333,344,372,400,'c'],[377,388,445,452,'c'],[427,448,457,465,'c'],[437,443,450,455,'r'],[433,433,442,462,'c'],[437,445,457,457,'r'],[442,452,478,489,'c'],
[475,488,510,515,'c'],[487,489,502,505,'r'],[478,490,540,542,'c'],[515,524,562,565,'c'],[545,555,576,586,'c'],[550,558,572,578,'r'],[535,548,575,592,'r'],[525,530,565,570,'r'],[518,525,538,545,'r'],[505,515,528,535,'r'],
[480,495,510,515,'r'],[468,472,483,490,'r'],[470,480,495,505,'c'],[485,498,505,510,'c'],[485,490,508,515,'r'],[500,507,530,532,'c'],[495,500,522,528,'r'],[480,488,512,518,'r'],[487,497,500,512,'r'],[498,500,568,576,'c']
];
var RED = '#e5332e', CY = '#54ffff';
C.forEach(function (c, i) {
  var x = cx(i), col = c[4] === 'r' ? RED : CY;
  if (c[0] < c[1]) el('line', { x1: x, x2: x, y1: c[0], y2: c[1], stroke: col, 'stroke-width': 1.6 });
  if (c[3] > c[2]) el('line', { x1: x, x2: x, y1: c[2], y2: c[3], stroke: col, 'stroke-width': 1.6 });
  if (c[4] === 'r') el('rect', { x: x - 4.5, y: c[1], width: 9, height: c[2] - c[1], fill: '#000', stroke: col, 'stroke-width': 1.6 });
  else el('rect', { x: x - 5, y: c[1], width: 10, height: c[2] - c[1], fill: col });
});

/* moving averages */
line([[7,306],[138,338],[345,375],[477,400],[551,406],[689,434],[772,448],[827,444],[923,441],[965,448],[1050,465],[1100,467],[1130,463],[1197,458],[1237,455],[1290,446],[1333,448],[1417,452],[1480,457],[1550,457],[1666,448]], '#bdbdbd');
line([[7,393],[35,400],[70,412],[113,433],[170,450],[213,460],[253,468],[300,480],[337,487],[387,491],[483,493],[500,489],[551,493],[689,503],[772,499],[827,489],[896,469],[930,457],[965,457],[1050,458],[1100,448],[1150,435],[1217,422],[1263,413],[1290,404],[1333,400],[1417,398],[1467,405],[1517,412],[1666,427]], '#00ee00');
line([[7,417],[20,420],[50,440],[83,480],[105,520],[130,550],[165,590],[185,587],[233,594],[260,597],[303,595],[320,588],[343,565],[360,544],[393,515],[413,493],[440,475],[483,462],[500,455],[551,475],[690,462],[827,441],[923,434],[992,462],[1030,482],[1050,468],[1070,468],[1100,453],[1117,440],[1140,418],[1153,410],[1177,395],[1203,368],[1243,340],[1283,300],[1317,278],[1333,280],[1355,293],[1367,310],[1397,337],[1440,377],[1483,420],[1517,457],[1543,478],[1585,489],[1626,510],[1666,524]], '#e000e0');
line([[7,473],[30,484],[58,515],[70,535],[83,565],[108,600],[128,620],[150,650],[165,655],[187,658],[200,640],[224,600],[270,550],[290,536],[310,524],[328,523],[341,516],[360,490],[392,468],[420,440],[445,425],[470,418],[500,430],[551,455],[689,455],[772,441],[827,430],[896,424],[930,441],[965,475],[1006,503],[1047,513],[1060,505],[1073,490],[1087,468],[1100,440],[1117,390],[1137,347],[1163,293],[1190,255],[1203,250],[1227,253],[1240,272],[1263,280],[1293,288],[1317,300],[1340,313],[1363,340],[1390,380],[1407,410],[1423,433],[1450,467],[1467,490],[1480,530],[1502,558],[1530,530],[1571,530],[1612,517],[1666,517]], '#dcdc00');
line([[7,497],[30,505],[58,535],[70,580],[83,630],[108,678],[122,693],[150,662],[173,628],[187,623],[200,590],[212,570],[224,552],[238,540],[251,527],[263,532],[289,518],[302,522],[328,515],[341,505],[353,490],[367,447],[392,420],[405,403],[418,409],[431,410],[456,420],[470,435],[494,450],[551,460],[620,455],[689,450],[760,440],[841,427],[900,430],[930,444],[965,496],[1006,517],[1047,510],[1068,475],[1087,430],[1100,380],[1112,317],[1124,260],[1137,228],[1163,213],[1177,235],[1203,270],[1220,288],[1242,307],[1267,293],[1280,282],[1293,277],[1305,280],[1317,297],[1333,330],[1343,370],[1367,415],[1397,450],[1427,470],[1447,490],[1460,544],[1481,579],[1502,565],[1522,535],[1543,507],[1570,489],[1598,493],[1633,510],[1666,521]], '#d8d8d8');
line([[1278,331],[1333,335],[1417,347],[1483,357],[1550,371],[1666,384]], '#0a10e8');

/* high / low markers */
el('path', { d: 'M1141 104L1124 97M1124 97l5 -1M1124 97l3 4M1124 97V100', stroke: '#a8a8a8', 'stroke-width': 1.4, fill: 'none' });
el('text', { class: 'mark', x: 1146, y: 112 }, '9.14');
el('path', { d: 'M113 749H97M97 749l6 -4M97 749l6 4', stroke: '#a8a8a8', 'stroke-width': 1.4, fill: 'none' });
el('text', { class: 'mark', x: 117, y: 758 }, '5.40');

/* top-right pane buttons */
el('path', { d: 'M1668 75l8 8 -8 8 -8 -8Z', fill: 'none', stroke: '#888', 'stroke-width': 1.4 });
el('rect', { x: 1689, y: 75, width: 15, height: 15, rx: 2, fill: 'none', stroke: '#888', 'stroke-width': 1.6 });
el('rect', { x: 1697, y: 78, width: 4, height: 9, fill: '#aaa' });

/* volume bars: [total top, red top, green top] */
var V = [
[1247,1252,1268],[1254,1262,1265],[1250,1267,1256],[1237,1271,1237],[1247,1263,1256],[1228,1271,1228],[1244,1263,1253],[1243,1248,1267],[1247,1259,1261],[1238,1243,1268],
[1240,1252,1261],[1240,1254,1257],[1247,1250,1269],[1237,1241,1269],[1229,1253,1249],[1184,1184,1271],[1126,1229,1169],[1209,1250,1232],[1226,1247,1250],[1182,1218,1237],
[1214,1227,1259],[1214,1232,1253],[1241,1252,1263],[1224,1265,1232],[1220,1232,1262],[1231,1250,1252],[1118,1175,1216],[1089,1133,1229],[1151,1226,1196],[1202,1241,1233],
[1166,1212,1226],[1147,1188,1231],[1190,1250,1214],[1209,1241,1241],[1223,1270,1225],[1231,1241,1262],[1235,1259,1249],[1231,1252,1250],[1220,1261,1232],[1240,1250,1262],
[1248,1256,1250],[1237,1255,1268],[1225,1262,1245],[1245,1258,1262],[1232,1258,1240],[1245,1252,1266],[1238,1260,1255],[1250,1256,1268],[1232,1262,1236],[1228,1235,1268],
[1182,1195,1262],[1230,1250,1240],[1240,1255,1262],[1245,1262,1248],[1250,1258,1266],[1250,1265,1255],[1252,1262,1262],[1248,1260,1265],[1245,1265,1250],[1240,1248,1266],
[1232,1245,1262],[1165,1192,1268],[1225,1250,1248],[1230,1248,1262],[1225,1255,1240],[1200,1240,1230],[1228,1255,1240],[1240,1258,1256],[1238,1250,1264],[1240,1262,1250],
[1238,1255,1262],[1240,1248,1266],[1178,1250,1190],[1225,1262,1240],[1240,1265,1256],[1250,1262,1266],[1252,1262,1268],[1250,1258,1268],[1248,1262,1262],[1250,1265,1258],
[1245,1255,1266],[1250,1256,1268],[1245,1255,1268],[1106,1108,1269],[911,1077,1107],[987,1079,1181],[929,984,1217],[810,1082,1001],[896,1058,1110],[982,1182,1072],
[1001,1113,1160],[1104,1160,1217],[1087,1183,1175],[1052,1160,1164],[1109,1229,1153],[1148,1191,1229],[1181,1222,1233],[1103,1143,1232],[1046,1143,1175],[1149,1241,1181],
[1143,1211,1205],[1195,1241,1226],[1193,1238,1228],[1205,1248,1229],[1203,1261,1216],[1230,1254,1249],[1233,1248,1257],[1242,1260,1254],[1241,1252,1262],[1222,1258,1237],
[1236,1262,1247],[1247,1253,1265],[1230,1269,1233],[1245,1266,1252],[1240,1265,1247],[1229,1250,1252],[1237,1252,1259],[1235,1246,1262],[1233,1248,1258],[1229,1237,1265],
[1235,1245,1261],[1236,1254,1262],[1240,1250,1258],[1235,1258,1246],[1245,1255,1262],[1226,1252,1264],[1232,1250,1256],[1240,1258,1262],[1236,1250,1258],[1228,1248,1240]
];
V.forEach(function (v, i) {
  var x = cx(i);
  el('rect', { x: x - 5, y: v[0], width: 10, height: 1273 - v[0], fill: '#ff00ff' });
  el('rect', { x: x - 5, y: v[1], width: 10, height: 1273 - v[1], fill: '#ff0000' });
  el('rect', { x: x - 2.5, y: v[2], width: 5, height: 1273 - v[2], fill: '#00ee20' });
});
el('rect', { x: 2, y: 1272, width: 1664, height: 2, fill: '#e6d800' });

line([[7,1196],[33,1202],[67,1207],[117,1213],[233,1216],[333,1217],[500,1216],[772,1222],[1050,1223],[1100,1217],[1157,1206],[1210,1202],[1283,1197],[1323,1195],[1503,1195],[1550,1202],[1666,1204]], '#e8e8e8', 2);
line([[7,1213],[63,1212],[200,1213],[217,1208],[233,1213],[257,1225],[300,1227],[333,1227],[347,1223],[387,1218],[417,1213],[500,1210],[700,1212],[1000,1215],[1050,1233],[1067,1232],[1117,1198],[1167,1167],[1213,1150],[1263,1142],[1310,1135],[1427,1133],[1513,1132],[1533,1145],[1550,1152],[1585,1171],[1666,1215]], '#e00000', 1.6);
line([[7,1243],[17,1246],[37,1246],[57,1248],[77,1242],[90,1240],[133,1243],[167,1243],[183,1238],[200,1227],[217,1203],[240,1194],[252,1187],[263,1192],[277,1210],[290,1216],[303,1216],[313,1223],[328,1227],[337,1213],[353,1177],[367,1162],[378,1158],[393,1145],[407,1153],[423,1175],[433,1183],[443,1187],[460,1205],[473,1222],[483,1227],[500,1230],[551,1226],[689,1247],[772,1219],[827,1219],[896,1213],[930,1206],[965,1219],[1033,1247],[1050,1239],[1062,1245],[1070,1213],[1080,1177],[1090,1133],[1103,1077],[1117,990],[1123,947],[1137,907],[1150,922],[1163,923],[1177,957],[1188,1013],[1207,1055],[1227,1097],[1243,1117],[1260,1120],[1277,1127],[1305,1128],[1320,1150],[1332,1177],[1350,1197],[1397,1232],[1433,1238],[1473,1240],[1517,1235],[1550,1233],[1666,1240]], '#00d000', 1.6);

/* stars */
[[1080,1106],[939,1175]].forEach(function (s) {
  var p = [], r;
  for (var k = 0; k < 10; k++) {
    r = k % 2 ? 3 : 7.5;
    p.push((s[0] + r * Math.sin(k * Math.PI / 5)).toFixed(1) + ',' + (s[1] - r * Math.cos(k * Math.PI / 5)).toFixed(1));
  }
  el('polygon', { points: p.join(' '), fill: '#ffee30' });
});

/* event flags */
el('path', { d: 'M518 761l3 5h-6Z', fill: '#e01010' });
el('text', { class: 'dollar', x: 518, y: 779, 'text-anchor': 'middle' }, 'S');
el('rect', { x: 1102, y: 762, width: 18, height: 18, fill: '#c07818' });
el('text', { class: 'flag', x: 1111, y: 777, 'text-anchor': 'middle' }, '榜');

/* axes */
el('rect', { x: 1710, y: 68, width: 1.5, height: 1214, fill: '#a00000' });
el('rect', { x: 0, y: 780, width: 1787, height: 2.5, fill: '#a00000' });
var labels = ['9.00','8.75','8.50','8.25','8.00','7.75','7.50','7.25','7.00','6.75','6.50','6.25','6.00','5.75','5.50'];
labels.forEach(function (t, i) {
  var y = 122 + i * 43.6;
  el('rect', { x: 1711, y: y - 0.75, width: 8, height: 1.5, fill: '#a00000' });
  el('text', { class: 'axis', x: 1743, y: y + 7 }, t);
});
[[70000,861],[60000,919],[50000,979],[40000,1038],[30000,1096],[20000,1155],[10000,1214]].forEach(function (a) {
  el('rect', { x: 1711, y: a[1] - 0.75, width: 8, height: 1.5, fill: '#a00000' });
  el('text', { class: 'axis', x: 1780, y: a[1] + 7, 'text-anchor': 'end' }, a[0]);
});
el('rect', { x: 1711, y: 696, width: 75, height: 22, fill: '#000088', stroke: '#a00000', 'stroke-width': 1 });
el('text', { class: 'axis', x: 1714, y: 713, style: 'fill:#d8d8d8' }, '5.57');
el('rect', { x: 1711.5, y: 1260, width: 39, height: 22, fill: 'none', stroke: '#a00000', 'stroke-width': 1.5 });
el('text', { class: 'axis', x: 1715, y: 1277 }, 'X10');
```
